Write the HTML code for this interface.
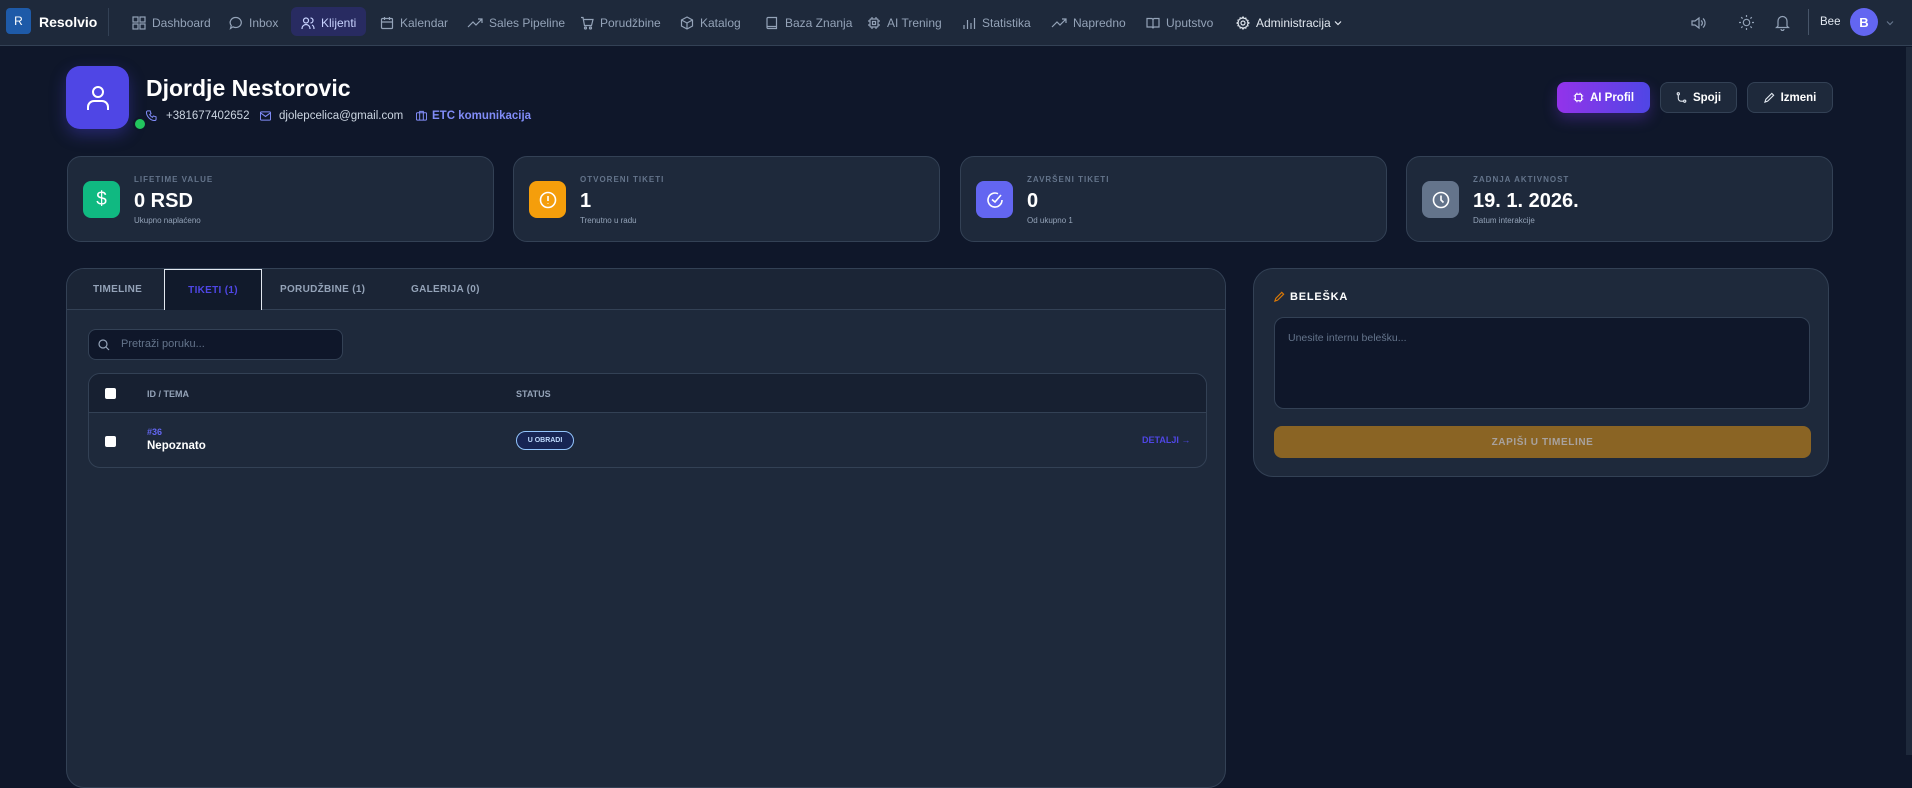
<!DOCTYPE html>
<html><head><meta charset="utf-8">
<style>
*{box-sizing:border-box;margin:0;padding:0}
body{width:1912px;height:755px;overflow:hidden;background:#0f172a;font-family:"Liberation Sans",sans-serif;color:#e2e8f0;position:relative}
.abs{position:absolute}
svg{display:block}
.nav{position:absolute;left:0;top:0;width:1912px;height:46px;background:#1e293b;border-bottom:1px solid #334155}
.ni{position:absolute;top:0;height:46px;display:flex;align-items:center;font-size:12px;color:#94a3b8;white-space:nowrap}
.ni svg{margin-right:6px}
.card{position:absolute;background:#1e293b;border:1px solid #334155;border-radius:14px}
.ib{position:absolute;left:15px;top:24px;width:37px;height:37px;border-radius:8px;display:flex;align-items:center;justify-content:center}
.lbl{position:absolute;left:66px;top:18px;font-size:8px;font-weight:bold;letter-spacing:1px;color:#64748b}
.val{position:absolute;left:66px;top:33px;font-size:20px;font-weight:bold;color:#fff}
.sub{position:absolute;left:66px;top:59px;font-size:8px;color:#94a3b8}
.btn{position:absolute;top:82px;height:31px;border-radius:8px;display:flex;align-items:center;justify-content:center;font-size:11.5px;font-weight:bold;color:#fff}
.btn svg{margin-right:6px}
.tab{position:absolute;top:0;height:41px;display:flex;align-items:center;font-size:10px;font-weight:bold;color:#94a3b8;letter-spacing:.3px}
</style></head><body>

<div class="nav">
  <div class="abs" style="left:6px;top:8px;width:25px;height:26px;background:#1e5aa8;border-radius:4px;color:#fff;font-size:12px;display:flex;align-items:center;justify-content:center">R</div>
  <div class="abs" style="left:39px;top:14px;font-size:14px;font-weight:bold;color:#fff">Resolvio</div>
  <div class="abs" style="left:108px;top:8px;width:1px;height:28px;background:#334155"></div>

  <div class="ni" style="left:132px"><svg width="14" height="14" viewBox="0 0 14 14" fill="none" stroke="#94a3b8" stroke-width="1.2"><rect x="1" y="1" width="5" height="5"/><rect x="8" y="1" width="5" height="5"/><rect x="1" y="8" width="5" height="5"/><rect x="8" y="8" width="5" height="5"/></svg>Dashboard</div>
  <div class="ni" style="left:229px"><svg width="14" height="14" viewBox="0 0 14 14" fill="none" stroke="#94a3b8" stroke-width="1.2"><path d="M7 1.5a5.5 5 0 1 1-3 9.3L1.5 12.5l.8-3A5.5 5 0 0 1 7 1.5z"/></svg>Inbox</div>
  <div class="abs" style="left:291px;top:7px;width:75px;height:29px;background:#312e81;opacity:.55;border-radius:6px"></div>
  <div class="ni" style="left:301px;color:#c7d2fe"><svg width="14" height="14" viewBox="0 0 14 14" fill="none" stroke="#c7d2fe" stroke-width="1.2"><circle cx="5" cy="4.5" r="2.5"/><path d="M1 13c0-3 2-4.5 4-4.5s4 1.5 4 4.5M9.5 2a2.5 2.5 0 0 1 0 5M11 9c1.3.5 2 2 2 4"/></svg>Klijenti</div>
  <div class="ni" style="left:380px"><svg width="14" height="14" viewBox="0 0 14 14" fill="none" stroke="#94a3b8" stroke-width="1.2"><rect x="1.5" y="2.5" width="11" height="10" rx="1"/><path d="M1.5 6h11M4.5 1v3M9.5 1v3"/></svg>Kalendar</div>
  <div class="ni" style="left:467px"><svg width="16" height="14" viewBox="0 0 16 14" fill="none" stroke="#94a3b8" stroke-width="1.2"><path d="M1 11l5-5 3 3 6-6M11 3h4v4"/></svg>Sales Pipeline</div>
  <div class="ni" style="left:580px"><svg width="14" height="14" viewBox="0 0 14 14" fill="none" stroke="#94a3b8" stroke-width="1.2"><path d="M1 1.5h2l1.5 8h7l1.5-6H4"/><circle cx="5.5" cy="12" r="1"/><circle cx="10.5" cy="12" r="1"/></svg>Porudžbine</div>
  <div class="ni" style="left:680px"><svg width="14" height="14" viewBox="0 0 14 14" fill="none" stroke="#94a3b8" stroke-width="1.2"><path d="M7 1l5.5 3v6L7 13 1.5 10V4zM1.5 4L7 7l5.5-3M7 7v6"/></svg>Katalog</div>
  <div class="ni" style="left:765px"><svg width="14" height="14" viewBox="0 0 14 14" fill="none" stroke="#94a3b8" stroke-width="1.2"><path d="M3 1.5h8.5v11H3a1 1 0 0 1-1-1v-9a1 1 0 0 1 1-1zM2 10.5h9.5"/></svg>Baza Znanja</div>
  <div class="ni" style="left:867px"><svg width="14" height="14" viewBox="0 0 14 14" fill="none" stroke="#94a3b8" stroke-width="1.2"><rect x="3" y="3" width="8" height="8" rx="1"/><rect x="5.5" y="5.5" width="3" height="3"/><path d="M5 1v2M9 1v2M5 11v2M9 11v2M1 5h2M1 9h2M11 5h2M11 9h2"/></svg>AI Trening</div>
  <div class="ni" style="left:962px"><svg width="14" height="14" viewBox="0 0 14 14" fill="none" stroke="#94a3b8" stroke-width="1.2"><path d="M2 13V9M5.5 13V4M9 13V7M12.5 13V2"/></svg>Statistika</div>
  <div class="ni" style="left:1051px"><svg width="16" height="14" viewBox="0 0 16 14" fill="none" stroke="#94a3b8" stroke-width="1.2"><path d="M1 11l5-5 3 3 6-6M11 3h4v4"/></svg>Napredno</div>
  <div class="ni" style="left:1146px"><svg width="14" height="14" viewBox="0 0 14 14" fill="none" stroke="#94a3b8" stroke-width="1.2"><path d="M1 2.5h4.5a1.5 1.5 0 0 1 1.5 1.5v8.5A1.5 1.5 0 0 0 5.5 11H1zM13 2.5H8.5A1.5 1.5 0 0 0 7 4v8.5A1.5 1.5 0 0 1 8.5 11H13z"/></svg>Uputstvo</div>
  <div class="ni" style="left:1236px;color:#e2e8f0"><svg width="14" height="14" viewBox="0 0 14 14" fill="none" stroke="#e2e8f0" stroke-width="1.2"><circle cx="7" cy="7" r="2"/><path d="M7 1l1 1.6 1.8-.5.4 1.8 1.8.5-.5 1.8L13 7l-1.5 1 .5 1.8-1.8.5-.4 1.8-1.8-.5L7 13l-1-1.5-1.8.5-.4-1.8-1.8-.5.5-1.8L1 7l1.5-1-.5-1.8 1.8-.5.4-1.8 1.8.5z"/></svg>Administracija<svg style="margin-left:3px" width="8" height="8" viewBox="0 0 8 8" fill="none" stroke="#e2e8f0" stroke-width="1.2"><path d="M1 2.5l3 3 3-3"/></svg></div>

  <svg class="abs" style="left:1690px;top:16px" width="16" height="14" viewBox="0 0 16 14" fill="none" stroke="#94a3b8" stroke-width="1.2"><path d="M2 5h3l4-3v10L5 9H2zM11 4.5a3 3 0 0 1 0 5M13 2.5a6 6 0 0 1 0 9"/></svg>
  <svg class="abs" style="left:1738px;top:14px" width="17" height="17" viewBox="0 0 17 17" fill="none" stroke="#94a3b8" stroke-width="1.2"><circle cx="8.5" cy="8.5" r="3.2"/><path d="M8.5 1v2M8.5 14v2M1 8.5h2M14 8.5h2M3.2 3.2l1.4 1.4M12.4 12.4l1.4 1.4M3.2 13.8l1.4-1.4M12.4 4.6l1.4-1.4"/></svg>
  <svg class="abs" style="left:1775px;top:14px" width="15" height="17" viewBox="0 0 15 17" fill="none" stroke="#94a3b8" stroke-width="1.2"><path d="M3 12V7a4.5 4.5 0 0 1 9 0v5l1.5 1.5h-12zM6 15a1.5 1.5 0 0 0 3 0"/></svg>
  <div class="abs" style="left:1808px;top:9px;width:1px;height:26px;background:#475569"></div>
  <div class="abs" style="left:1820px;top:16px;font-size:11.5px;color:#e2e8f0">Bee</div>
  <div class="abs" style="left:1850px;top:8px;width:28px;height:28px;border-radius:50%;background:#6366f1;color:#fff;font-size:13px;font-weight:bold;display:flex;align-items:center;justify-content:center">B</div>
  <svg class="abs" style="left:1886px;top:19px" width="8" height="8" viewBox="0 0 8 8" fill="none" stroke="#64748b" stroke-width="1.2"><path d="M1 2.5l3 3 3-3"/></svg>
</div>
<div class="abs" style="left:1906px;top:47px;width:6px;height:708px;background:#1e293b"></div>

<!-- header -->
<div class="abs" style="left:66px;top:66px;width:63px;height:63px;border-radius:14px;background:#4f46e5;box-shadow:0 6px 16px rgba(79,70,229,.35);display:flex;align-items:center;justify-content:center">
  <svg width="26" height="28" viewBox="0 0 26 28" fill="none" stroke="#fff" stroke-width="2"><circle cx="13" cy="8" r="5"/><path d="M3 26v-3a6 6 0 0 1 6-6h8a6 6 0 0 1 6 6v3"/></svg>
</div>
<div class="abs" style="left:133px;top:117px;width:14px;height:14px;border-radius:50%;background:#22c55e;border:2px solid #0f172a"></div>
<div class="abs" style="left:146px;top:75px;font-size:23px;font-weight:bold;color:#fff">Djordje Nestorovic</div>
<svg class="abs" style="left:146px;top:110px" width="11" height="11" viewBox="0 0 12 12" fill="none" stroke="#818cf8" stroke-width="1.1"><path d="M2 1h2.5l1 3-1.5 1a7 7 0 0 0 3 3l1-1.5 3 1V10a1.5 1.5 0 0 1-1.5 1.5C5 11.5.5 7 .5 2.5A1.5 1.5 0 0 1 2 1z"/></svg>
<div class="abs" style="left:166px;top:110px;font-size:11.5px;color:#cbd5e1">+381677402652</div>
<svg class="abs" style="left:260px;top:111px" width="11" height="10" viewBox="0 0 12 10" fill="none" stroke="#818cf8" stroke-width="1.1"><rect x=".5" y=".5" width="11" height="9" rx="1"/><path d="M.5 1.5L6 5.5l5.5-4"/></svg>
<div class="abs" style="left:279px;top:110px;font-size:11.5px;color:#cbd5e1">djolepcelica@gmail.com</div>
<svg class="abs" style="left:416px;top:110px" width="11" height="11" viewBox="0 0 12 12" fill="none" stroke="#818cf8" stroke-width="1.1"><rect x=".5" y="3" width="11" height="8" rx="1"/><path d="M4 3V1.5h4V3M4 3v8M8 3v8"/></svg>
<div class="abs" style="left:432px;top:110px;font-size:11.5px;font-weight:bold;color:#818cf8">ETC komunikacija</div>

<div class="btn" style="left:1557px;width:93px;background:linear-gradient(90deg,#9333ea,#4f46e5);box-shadow:0 6px 14px rgba(124,58,237,.3)"><svg width="11" height="11" viewBox="0 0 14 14" fill="none" stroke="#fff" stroke-width="1.4"><rect x="3" y="3" width="8" height="8" rx="1"/><path d="M5 1v2M9 1v2M5 11v2M9 11v2M1 5h2M1 9h2M11 5h2M11 9h2"/></svg>AI Profil</div>
<div class="btn" style="left:1660px;width:77px;background:#1e293b;border:1px solid #334155"><svg width="11" height="11" viewBox="0 0 12 12" fill="none" stroke="#e2e8f0" stroke-width="1.2"><circle cx="2.5" cy="2" r="1.2"/><circle cx="9.5" cy="10" r="1.2"/><path d="M2.5 3.3V7a3 3 0 0 0 3 3h2.8"/></svg>Spoji</div>
<div class="btn" style="left:1747px;width:86px;background:#1e293b;border:1px solid #334155"><svg width="11" height="11" viewBox="0 0 12 12" fill="none" stroke="#e2e8f0" stroke-width="1.2"><path d="M8.5 1.5l2 2L4 10l-3 1 1-3z"/></svg>Izmeni</div>

<!-- stats -->
<div class="card" style="left:67px;top:156px;width:427px;height:86px">
  <div class="ib" style="background:#10b981"><span style="color:#fff;font-size:19px">$</span></div>
  <div class="lbl">LIFETIME VALUE</div><div class="val">0 RSD</div><div class="sub">Ukupno naplaćeno</div>
</div>
<div class="card" style="left:513px;top:156px;width:427px;height:86px">
  <div class="ib" style="background:#f59e0b"><svg width="18" height="18" viewBox="0 0 18 18" fill="none" stroke="#fff" stroke-width="1.6"><circle cx="9" cy="9" r="7.5"/><path d="M9 5v5M9 12.5v.5"/></svg></div>
  <div class="lbl">OTVORENI TIKETI</div><div class="val">1</div><div class="sub">Trenutno u radu</div>
</div>
<div class="card" style="left:960px;top:156px;width:427px;height:86px">
  <div class="ib" style="background:#6366f1"><svg width="18" height="18" viewBox="0 0 18 18" fill="none" stroke="#fff" stroke-width="1.6"><path d="M16 9A7 7 0 1 1 12 2.7"/><path d="M6 8.5l3 2.5 6-7"/></svg></div>
  <div class="lbl">ZAVRŠENI TIKETI</div><div class="val">0</div><div class="sub">Od ukupno 1</div>
</div>
<div class="card" style="left:1406px;top:156px;width:427px;height:86px">
  <div class="ib" style="background:#64748b"><svg width="18" height="18" viewBox="0 0 18 18" fill="none" stroke="#fff" stroke-width="1.6"><circle cx="9" cy="9" r="7.5"/><path d="M9 4.5V9l2.5 2.5"/></svg></div>
  <div class="lbl">ZADNJA AKTIVNOST</div><div class="val">19. 1. 2026.</div><div class="sub">Datum interakcije</div>
</div>

<!-- main card -->
<div class="card" style="left:66px;top:268px;width:1160px;height:520px;border-radius:18px;overflow:hidden">
  <div class="abs" style="left:0;top:0;width:1160px;height:41px;background:#1b2536;border-bottom:1px solid #334155"></div>
  <div class="tab" style="left:26px">TIMELINE</div>
  <div class="tab" style="left:97px;width:98px;justify-content:center;background:#111a2b;border:1px solid #e2e8f0;border-bottom:none;color:#4f46e5">TIKETI (1)</div>
  <div class="tab" style="left:213px">PORUDŽBINE (1)</div>
  <div class="tab" style="left:344px">GALERIJA (0)</div>

  <div class="abs" style="left:21px;top:60px;width:255px;height:31px;background:#0f172a;border:1px solid #334155;border-radius:8px">
    <svg class="abs" style="left:9px;top:9px" width="12" height="12" viewBox="0 0 12 12" fill="none" stroke="#94a3b8" stroke-width="1.2"><circle cx="5" cy="5" r="4"/><path d="M8 8l3 3"/></svg>
    <div class="abs" style="left:32px;top:8px;font-size:11px;color:#64748b">Pretraži poruku...</div>
  </div>

  <div class="abs" style="left:21px;top:104px;width:1119px;height:95px;border:1px solid #334155;border-radius:12px;overflow:hidden">
    <div class="abs" style="left:0;top:0;width:1119px;height:39px;background:#172031;border-bottom:1px solid #334155"></div>
    <div class="abs" style="left:16px;top:14px;width:11px;height:11px;background:#fff;border-radius:2px"></div>
    <div class="abs" style="left:58px;top:15px;font-size:9px;font-weight:bold;color:#94a3b8">ID / TEMA</div>
    <div class="abs" style="left:427px;top:15px;font-size:9px;font-weight:bold;color:#94a3b8">STATUS</div>
    <div class="abs" style="left:16px;top:62px;width:11px;height:11px;background:#fff;border-radius:2px"></div>
    <div class="abs" style="left:58px;top:53px;font-size:9px;font-weight:bold;color:#6366f1">#36</div>
    <div class="abs" style="left:58px;top:66px;font-size:11.5px;font-weight:bold;color:#fff">Nepoznato</div>
    <div class="abs" style="left:427px;top:57px;width:58px;height:19px;border:1.5px solid #93c5fd;border-radius:10px;background:#172554;font-size:7px;font-weight:bold;color:#bfdbfe;display:flex;align-items:center;justify-content:center">U OBRADI</div>
    <div class="abs" style="left:1053px;top:61px;font-size:9px;color:#4f46e5;font-weight:bold">DETALJI →</div>
  </div>
</div>

<!-- note panel -->
<div class="card" style="left:1253px;top:268px;width:576px;height:209px;border-radius:20px">
  <svg class="abs" style="left:20px;top:22px" width="11" height="11" viewBox="0 0 12 12" fill="none" stroke="#d97706" stroke-width="1.3"><path d="M8.5 1.5l2 2L4 10l-3 1 1-3z"/></svg>
  <div class="abs" style="left:36px;top:22px;font-size:11px;font-weight:bold;color:#fff;letter-spacing:.8px">BELEŠKA</div>
  <div class="abs" style="left:20px;top:48px;width:536px;height:92px;background:#0f172a;border:1px solid #334155;border-radius:10px">
    <div class="abs" style="left:13px;top:14px;font-size:10.5px;color:#64748b">Unesite internu belešku...</div>
  </div>
  <div class="abs" style="left:20px;top:157px;width:537px;height:32px;background:#8a6424;border-radius:8px;display:flex;align-items:center;justify-content:center;font-size:10px;font-weight:bold;color:#a8a29e;letter-spacing:.6px">ZAPIŠI U TIMELINE</div>
</div>

</body></html>
